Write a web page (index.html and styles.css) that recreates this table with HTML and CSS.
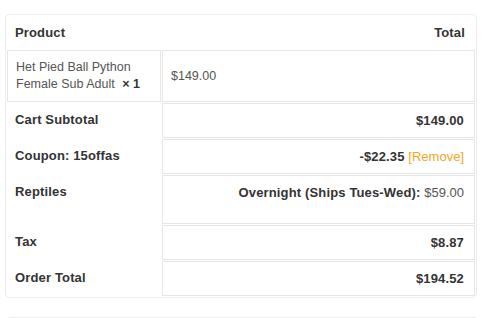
FILE: index.html
```html
<!DOCTYPE html>
<html lang="en">

<head>
    <meta charset="UTF-8">
    <meta name="viewport" content="width=device-width, initial-scale=1.0">
    <link rel="stylesheet" href="styles.css">
</head>

<body>

    <table class="order-review">
        <colgroup>
            <col class="col-name">
            <col class="col-total">
        </colgroup>
        <thead>
            <tr>
                <th class="product-name">Product</th>
                <th class="product-total">Total</th>
            </tr>
        </thead>
        <tbody>
            <tr class="cart-item">
                <td class="product-name">Het Pied Ball Python Female Sub Adult <strong class="product-quantity">×&nbsp;1</strong></td>
                <td class="product-price">$149.00</td>
            </tr>
        </tbody>
        <tfoot>
            <tr>
                <th>Cart Subtotal</th>
                <td class="amount">$149.00</td>
            </tr>
            <tr>
                <th>Coupon: 15offas</th>
                <td class="amount">-$22.35 <a href="#" class="remove-coupon">[Remove]</a></td>
            </tr>
            <tr>
                <th>Reptiles</th>
                <td class="shipping">Overnight (Ships Tues-Wed): <span class="price">$59.00</span></td>
            </tr>
            <tr>
                <th>Tax</th>
                <td class="amount">$8.87</td>
            </tr>
            <tr>
                <th>Order Total</th>
                <td class="amount">$194.52</td>
            </tr>
        </tfoot>
    </table>

    <!-- блок оплати нижче -->
    <div class="payment-box"></div>

</body>

</html>
```

FILE: styles.css
```css
body {
    font-family: "Liberation Sans", Arial, sans-serif;
    font-size: 13px;
    margin: 0;
    padding: 14px 0 0 5px;
    background-color: #fff;
    color: #555;
}

.order-review {
    width: 472px;
    table-layout: fixed;
    border-collapse: separate;
    border-spacing: 1px;
    border: 1px solid #ececec;
    border-radius: 5px;
}

.col-name {
    width: 154px;
}

.order-review th,
.order-review td {
    line-height: 17px;
    padding: 8px;
    vertical-align: top;
    text-align: left;
}

.order-review th {
    color: #333;
    font-weight: bold;
    letter-spacing: 0.15px;
}

.order-review thead th.product-total {
    text-align: right;
    padding-right: 10px;
}

.order-review td {
    border: 1px solid #e6e6e6;
}

.cart-item td {
    font-size: 12.5px;
    vertical-align: middle;
}

.product-quantity {
    margin-left: 4px;
    color: #333;
}

.order-review td.amount,
.order-review td.shipping {
    text-align: right;
    font-weight: bold;
    letter-spacing: 0.15px;
    color: #333;
    padding-right: 10px;
}

.order-review td.shipping {
    padding-bottom: 22px;
}

.shipping .price {
    font-weight: normal;
    letter-spacing: 0;
    color: #555;
}

.remove-coupon {
    font-weight: normal;
    letter-spacing: 0;
    color: #f5a623;
    text-decoration: none;
}

.payment-box {
    width: 472px;
    height: 40px;
    margin-top: 19px;
    border: 1px solid #ececec;
    border-radius: 5px;
}
```
